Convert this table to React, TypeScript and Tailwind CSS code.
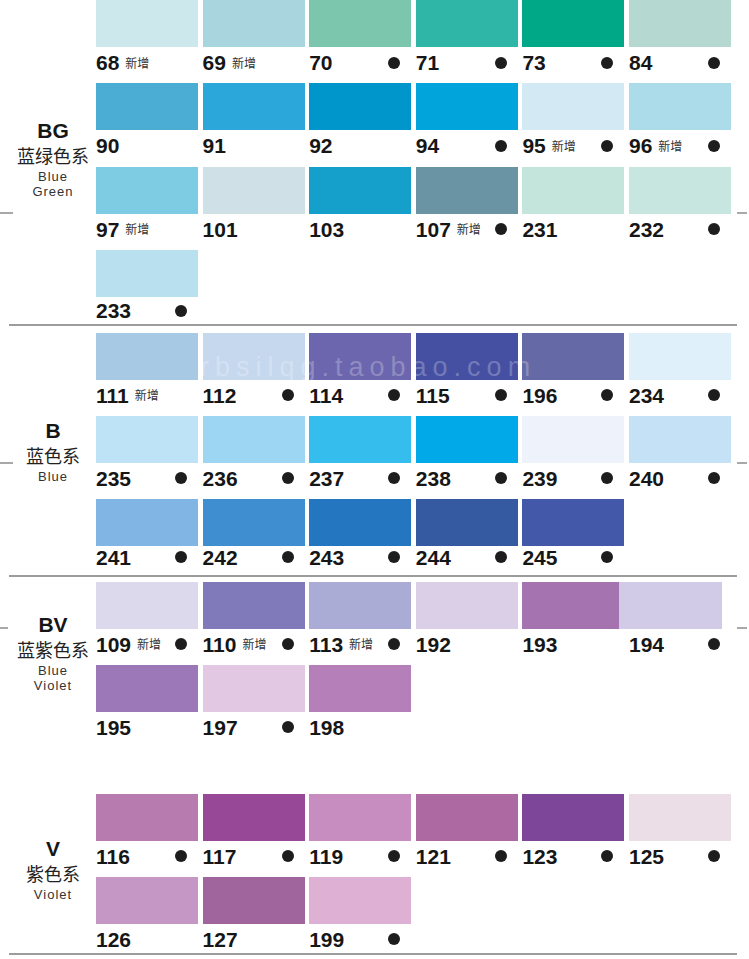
import React from "react";

type Item = { n: string; c: string; neu?: boolean; dot?: boolean; sw?: string };
type Section = {
  code: string;
  zh: string;
  en: string[];
  rows: Item[][];
  lastLabel: string;
  lastPt: string;
  labelPb: string;
};

const sections: Section[] = [
  {
    code: "BG",
    zh: "蓝绿色系",
    en: ["Blue", "Green"],
    lastLabel: "h-[27px]",
    lastPt: "pt-[3.5px]",
    labelPb: "pb-[6px]",
    rows: [
      [
        { n: "68", c: "#cde8ec", neu: true },
        { n: "69", c: "#a9d5df", neu: true },
        { n: "70", c: "#7bc6ad", dot: true },
        { n: "71", c: "#30b6a6", dot: true },
        { n: "73", c: "#00a887", dot: true },
        { n: "84", c: "#b5d8d1", dot: true },
      ],
      [
        { n: "90", c: "#4badd3" },
        { n: "91", c: "#2ba8d9" },
        { n: "92", c: "#0096cc" },
        { n: "94", c: "#02a4dc", dot: true },
        { n: "95", c: "#d3eaf5", neu: true, dot: true },
        { n: "96", c: "#acdbe9", neu: true, dot: true },
      ],
      [
        { n: "97", c: "#7ecbe4", neu: true },
        { n: "101", c: "#cfe1e7" },
        { n: "103", c: "#159fcb" },
        { n: "107", c: "#6a93a4", neu: true, dot: true },
        { n: "231", c: "#c4e5dc" },
        { n: "232", c: "#c7e6df", dot: true },
      ],
      [{ n: "233", c: "#b8e0ef", dot: true }],
    ],
  },
  {
    code: "B",
    zh: "蓝色系",
    en: ["Blue"],
    lastLabel: "h-[28.5px]",
    lastPt: "pt-[0.5px]",
    labelPb: "pb-[5px]",
    rows: [
      [
        { n: "111", c: "#a7c9e4", neu: true },
        { n: "112", c: "#c6d8ee", dot: true },
        { n: "114", c: "#6b66ad", dot: true },
        { n: "115", c: "#4550a2", dot: true },
        { n: "196", c: "#6569a5", dot: true },
        { n: "234", c: "#dff0fa", dot: true },
      ],
      [
        { n: "235", c: "#bee3f7", dot: true },
        { n: "236", c: "#9dd6f3", dot: true },
        { n: "237", c: "#35bdee", dot: true },
        { n: "238", c: "#02a9e9", dot: true },
        { n: "239", c: "#eef3fb", dot: true },
        { n: "240", c: "#c5e1f5", dot: true },
      ],
      [
        { n: "241", c: "#81b6e4", dot: true },
        { n: "242", c: "#3f8fd0", dot: true },
        { n: "243", c: "#2576c0", dot: true },
        { n: "244", c: "#355aa2", dot: true },
        { n: "245", c: "#4358a9", dot: true },
      ],
    ],
  },
  {
    code: "BV",
    zh: "蓝紫色系",
    en: ["Blue", "Violet"],
    lastLabel: "h-[36.3px]",
    lastPt: "pt-[5px]",
    labelPb: "pb-[23px]",
    rows: [
      [
        { n: "109", c: "#dcd9ec", neu: true, dot: true },
        { n: "110", c: "#8079ba", neu: true, dot: true },
        { n: "113", c: "#aaacd5", neu: true, dot: true },
        { n: "192", c: "#dbcfe7" },
        { n: "193", c: "#a673b1", sw: "w-[97px]" },
        { n: "194", c: "#d1cbe8", dot: true, sw: "-ml-[10px] w-[103px]" },
      ],
      [
        { n: "195", c: "#9c78b8" },
        { n: "197", c: "#e2c8e2", dot: true },
        { n: "198", c: "#b580b9" },
      ],
    ],
  },
  {
    code: "V",
    zh: "紫色系",
    en: ["Violet"],
    lastLabel: "h-[28.7px]",
    lastPt: "pt-[5px]",
    labelPb: "pb-[8px]",
    rows: [
      [
        { n: "116", c: "#b87bb0", dot: true },
        { n: "117", c: "#974897", dot: true },
        { n: "119", c: "#c78dc0", dot: true },
        { n: "121", c: "#ac69a2", dot: true },
        { n: "123", c: "#7e4699", dot: true },
        { n: "125", c: "#ebdee6", dot: true },
      ],
      [
        { n: "126", c: "#c497c5" },
        { n: "127", c: "#a1659e" },
        { n: "199", c: "#deb1d4", dot: true },
      ],
    ],
  },
];

const sans = "font-['Liberation_Sans',Arial,sans-serif]";
const cjk = "font-['Noto_Sans_CJK_SC','Noto_Sans',sans-serif]";

function Cell({ it, labelH, pt }: { it: Item; labelH: string; pt: string }) {
  return (
    <div className="flex flex-col">
      <div className={`h-[47px] ${it.sw ?? "w-full"}`} style={{ backgroundColor: it.c }} />
      <div className={`${labelH} ${pt} flex items-start`}>
        <div className="flex items-center h-[21px] w-full">
          <span className={`${sans} font-bold text-[21px] leading-[21px] text-[#161616]`}>{it.n}</span>
          {it.neu && (
            <span className={`${cjk} text-[12px] leading-[14px] text-[#333] ml-[6px]`}>新增</span>
          )}
          {it.dot && <span className="ml-auto mr-[11px] w-[12px] h-[12px] rounded-full bg-[#1d1d1d]" />}
        </div>
      </div>
    </div>
  );
}

function SectionBlock({ s }: { s: Section }) {
  return (
    <div className="flex">
      <div className={`w-[96px] pl-[10px] flex flex-col items-center justify-center ${s.labelPb}`}>
        <div className={`${sans} font-bold text-[21px] leading-[24px] text-[#161616]`}>{s.code}</div>
        <div className={`${cjk} text-[18px] leading-[22px] text-[#222] mt-[1px]`}>{s.zh}</div>
        <div className="mt-[3px] flex flex-col items-center">
          {s.en.map((e) => (
            <div key={e} className={`${sans} text-[13px] leading-[15px] tracking-[1px] text-[#333]`}>
              {e}
            </div>
          ))}
        </div>
      </div>
      <div className="flex flex-col w-[635px]">
        {s.rows.map((row, ri) => {
          const last = ri === s.rows.length - 1;
          return (
            <div key={ri} className="grid grid-cols-[repeat(6,102px)] gap-x-[4.6px]">
              {row.map((it) => (
                <Cell
                  key={it.n}
                  it={it}
                  labelH={last ? s.lastLabel : "h-[36.3px]"}
                  pt={last ? s.lastPt : "pt-[5px]"}
                />
              ))}
            </div>
          );
        })}
      </div>
    </div>
  );
}

function Sep() {
  return <div className="ml-[9px] w-[728px] h-[2px] bg-[#9c9c9c]" />;
}

export default function App() {
  return (
    <div className="relative w-[749px] h-[959px] bg-white overflow-hidden">
      <SectionBlock s={sections[0]} />
      <Sep />
      <div className="h-[6.7px]" />
      <SectionBlock s={sections[1]} />
      <Sep />
      <div className="h-[5px]" />
      <SectionBlock s={sections[2]} />
      <div className="h-[45.4px]" />
      <SectionBlock s={sections[3]} />
      <Sep />

      {/* margin tick marks */}
      <div className="absolute left-0 top-[212px] w-[13px] h-[2px] bg-[#a8a8a8]" />
      <div className="absolute left-[737px] top-[212px] w-[10px] h-[2px] bg-[#a8a8a8]" />
      <div className="absolute left-0 top-[462px] w-[13px] h-[2px] bg-[#a8a8a8]" />
      <div className="absolute left-[737px] top-[462px] w-[10px] h-[2px] bg-[#a8a8a8]" />
      <div className="absolute left-0 top-[627px] w-[8px] h-[2px] bg-[#a8a8a8]" />
      <div className="absolute left-[737px] top-[627px] w-[10px] h-[2px] bg-[#a8a8a8]" />

      {/* watermark */}
      <div
        className={`absolute left-[200px] top-[352px] ${sans} text-[27px] leading-[30px] tracking-[6px] text-white/25 pointer-events-none select-none`}
      >
        rbsilqg.taobao.com
      </div>
    </div>
  );
}
